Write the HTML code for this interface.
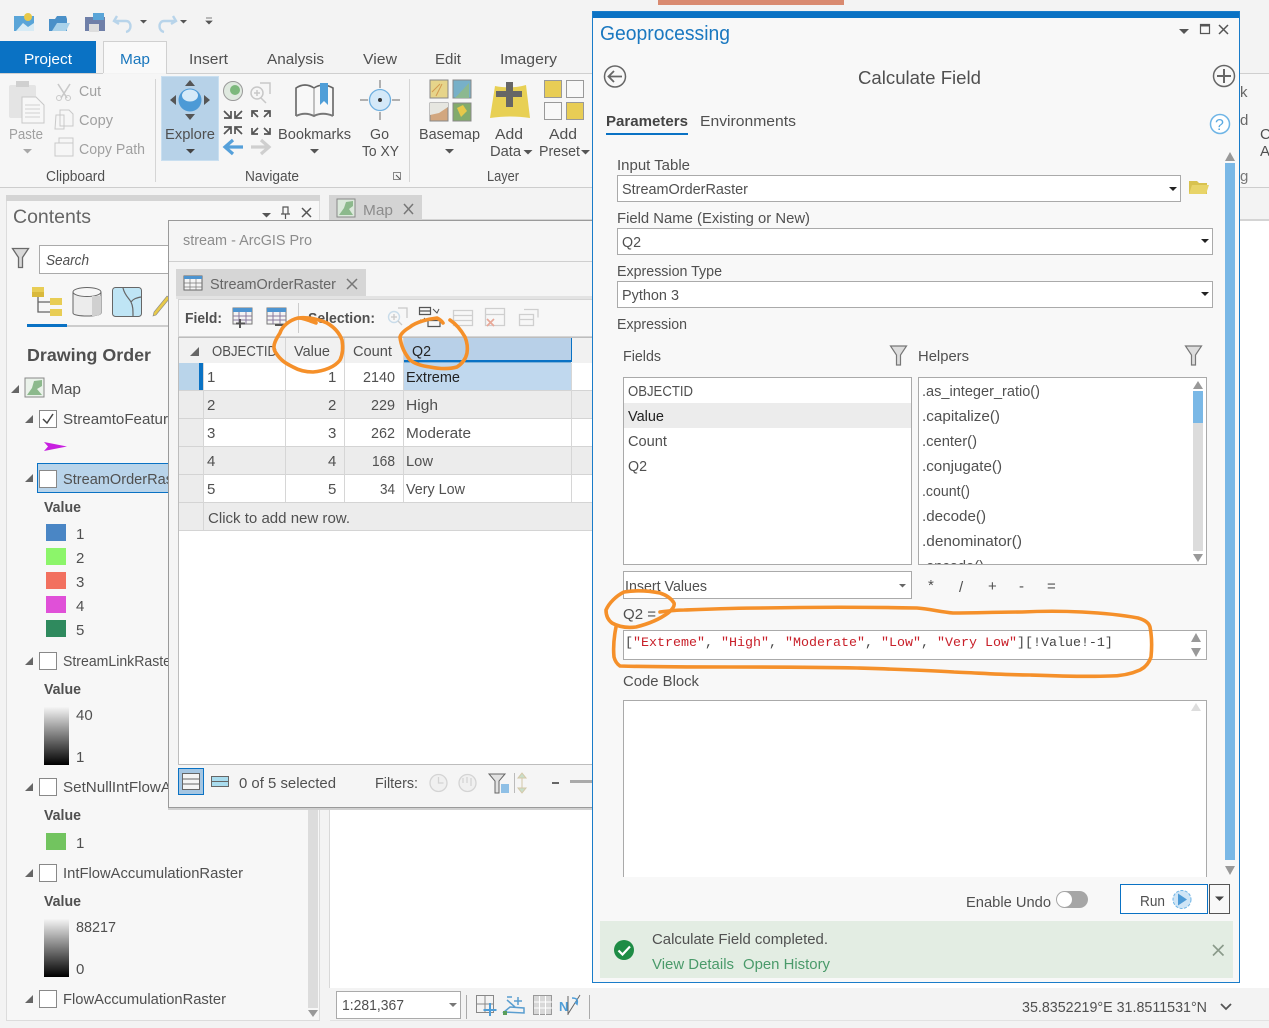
<!DOCTYPE html>
<html><head><meta charset="utf-8"><title>Calculate Field</title>
<style>
html,body{margin:0;padding:0;background:#f3f3f3;width:1269px;height:1028px;overflow:hidden}
svg{display:block;filter:blur(.35px)}
text{font-family:"Liberation Sans",sans-serif;font-size:15px;fill:#505050;white-space:pre}
.g{fill:#8c8c8c}.b{font-weight:bold}.d{fill:#222}
</style></head><body>
<svg width="1269" height="1028" viewBox="0 0 1269 1028" xmlns="http://www.w3.org/2000/svg">
<defs>
<linearGradient id="gr" x1="0" y1="0" x2="0" y2="1"><stop offset="0" stop-color="#f5f5f5"/><stop offset="1" stop-color="#000"/></linearGradient>
</defs>
<rect width="1269" height="1028" fill="#f3f3f3"/>
<rect x="658" y="0" width="186" height="5" fill="#d98a70"/>

<!-- quick access -->
<path d="M14 16h20v15H14z" fill="#5aa5d8"/><path d="M16 31l7-8 5 4 6-4v8z" fill="#d7ebf5"/><circle cx="28" cy="17" r="4" fill="#e7c94a"/>
<path d="M49 19h6l2-3h9l1 3v12H49z" fill="#4a90c8"/><path d="M52 31l5-8h13l-4 8z" fill="#a9d2ea"/>
<rect x="85" y="17" width="20" height="14" fill="#6f7fa8"/><rect x="89" y="24" width="10" height="8" fill="#ddd"/><rect x="93" y="13" width="11" height="7" fill="#5aa5d8"/>
<path d="M117 16l-3 5 5 3M115 21h11c6 0 6 10 0 11" fill="none" stroke="#b8d4ea" stroke-width="2.4"/>
<path d="M173 16l3 5-5 3M175 21h-11c-6 0-6 10 0 11" fill="none" stroke="#b8d4ea" stroke-width="2.4"/>
<path d="M140 20h7l-3.500 3.500zM180 20h7l-3.500 3.500z" fill="#555"/>
<path d="M206 18h6M206 21h6l-3 3z" fill="#555" stroke="#555" stroke-width=".7"/>

<!-- tabs -->
<rect x="0" y="41" width="96" height="32" fill="#0a72c4"/>
<text x="24" y="64" textLength="48" lengthAdjust="spacingAndGlyphs" style="fill:#fff">Project</text>
<path d="M103.500 73V41.500h63V73" fill="#f9f9f9" stroke="#d0d0d0"/>
<text x="120" y="64" textLength="30" lengthAdjust="spacingAndGlyphs" style="fill:#1876bd">Map</text>
<text x="189" y="64" textLength="39" lengthAdjust="spacingAndGlyphs">Insert</text>
<text x="267" y="64" textLength="57" lengthAdjust="spacingAndGlyphs">Analysis</text>
<text x="363" y="64" textLength="34" lengthAdjust="spacingAndGlyphs">View</text>
<text x="435" y="64" textLength="26" lengthAdjust="spacingAndGlyphs">Edit</text>
<text x="500" y="64" textLength="57" lengthAdjust="spacingAndGlyphs">Imagery</text>
<path d="M0 73.500H103M166 73.500H1269" stroke="#cfcfcf"/>
<rect x="0" y="74" width="1269" height="113" fill="#f6f6f6"/>
<path d="M0 187.500H1269" stroke="#cdcdcd"/>
<path d="M155.500 79v103M409.500 79v103" stroke="#d5d5d5"/>

<!-- clipboard -->
<rect x="9" y="85" width="27" height="33" rx="2" fill="#e4e4e4"/><rect x="16" y="81" width="13" height="6" fill="#d0d0d0"/>
<path d="M22 97h14l8 8v18H22z" fill="#f7f7f7" stroke="#c8c8c8"/><path d="M25 105h15M25 109h15M25 113h15M25 117h15" stroke="#d0d0d0"/>
<text x="9" y="139" textLength="34" lengthAdjust="spacingAndGlyphs" class="g" style="fill:#a0a0a0">Paste</text>
<path d="M23 149h9l-4.500 4.500z" fill="#a8a8a8"/>
<path d="M58 84l9 14M70 84l-9 14" stroke="#c9c9c9" stroke-width="1.600"/><circle cx="59" cy="98" r="2.500" fill="none" stroke="#c9c9c9"/><circle cx="68" cy="98" r="2.500" fill="none" stroke="#c9c9c9"/>
<text x="79" y="96" textLength="22" lengthAdjust="spacingAndGlyphs" style="fill:#a0a0a0">Cut</text>
<path d="M56 115h8v14h-9zM60 110h9l4 4v12h-13z" fill="#f6f6f6" stroke="#c9c9c9"/>
<text x="79" y="125" textLength="34" lengthAdjust="spacingAndGlyphs" style="fill:#a0a0a0">Copy</text>
<path d="M55 143h18v13H55zM59 138h14v5H59z" fill="#f6f6f6" stroke="#c9c9c9"/>
<text x="79" y="154" textLength="66" lengthAdjust="spacingAndGlyphs" style="fill:#a0a0a0">Copy Path</text>
<text x="46" y="181" textLength="59" lengthAdjust="spacingAndGlyphs">Clipboard</text>

<!-- navigate -->
<rect x="161.500" y="76.500" width="57" height="84" fill="#b7d2e8" stroke="#c9dff0"/>
<circle cx="190" cy="100" r="11.500" fill="#4d9ad6"/><ellipse cx="190" cy="95.500" rx="8" ry="6" fill="#d6eaf8"/>
<path d="M190 80l5 6h-10zM190 120l5-6h-10zM170 100l6-5v10zM210 100l-6-5v10z" fill="#555"/>
<text x="165" y="139" textLength="50" lengthAdjust="spacingAndGlyphs">Explore</text>
<path d="M186 149h9l-4.500 4.500z" fill="#444"/>
<circle cx="233" cy="91" r="9.500" fill="#dfe9df" stroke="#9a9a9a"/><circle cx="235" cy="90" r="5" fill="#7cb87c"/>
<circle cx="257" cy="93" r="6" fill="none" stroke="#c8c8c8" stroke-width="1.500"/><path d="M261 98l5 5M257 90v6M254 93h6M260 83h10v11" fill="none" stroke="#c8c8c8" stroke-width="1.500"/>
<path d="M224 111l7 7M224 118h7v-7M242 111l-7 7M242 118h-7v-7M224 134l7-7M224 127h7v7M242 134l-7-7M242 127h-7v7M252 111l6 6M252 117v-6h6M270 111l-6 6M270 117v-6h-6M252 134l6-6M252 128v6h6M270 134l-6-6M270 128v6h-6" fill="none" stroke="#555" stroke-width="1.700"/>
<path d="M243 147h-17M233 140l-8 7 8 7" fill="none" stroke="#55a0da" stroke-width="3.200"/>
<path d="M251 147h17M261 140l8 7-8 7" fill="none" stroke="#cfcfcf" stroke-width="3.200"/>
<path d="M296 116V88c6-4 12-4 18 0 6-4 12-4 19 0v28" fill="#f8f8f8" stroke="#666" stroke-width="1.600"/><path d="M314 88v28" stroke="#888"/>
<path d="M296 116c6-3 12-3 18 0 6-3 12-3 19 0" fill="none" stroke="#777" stroke-width="2"/><path d="M320 83h8v22l-4-4-4 4z" fill="#4f9ed8"/>
<text x="278" y="139" textLength="73" lengthAdjust="spacingAndGlyphs">Bookmarks</text>
<path d="M310 149h9l-4.500 4.500z" fill="#555"/>
<circle cx="380" cy="100" r="10.500" fill="#d4e9f8" stroke="#6fb0e0" stroke-width="1.300"/><circle cx="380" cy="100" r="2" fill="#333"/>
<path d="M380 80v8M380 112v8M360 100h8M392 100h8" stroke="#999" stroke-width="1.500"/>
<text x="370" y="139" textLength="19" lengthAdjust="spacingAndGlyphs">Go</text>
<text x="362" y="156" textLength="37" lengthAdjust="spacingAndGlyphs">To XY</text>
<text x="245" y="181" textLength="54" lengthAdjust="spacingAndGlyphs">Navigate</text>
<path d="M393.500 172.500h7v7h-7z" fill="none" stroke="#888"/><path d="M396 175l4 4" stroke="#555"/>

<!-- layer -->
<rect x="430" y="80" width="18" height="18" fill="#e6d48a" stroke="#888"/><path d="M432 92l8-8M436 96l6-12" stroke="#d29a50"/>
<rect x="453" y="80" width="18" height="18" fill="#77b0c8" stroke="#888"/><path d="M455 98l14-15v15z" fill="#8cb890"/>
<rect x="430" y="103" width="18" height="18" fill="#d2a77f" stroke="#888"/><path d="M430 103h18v4l-9 6-9 2z" fill="#e6e6e0"/>
<rect x="453" y="103" width="18" height="18" fill="#83ab6c" stroke="#888"/><path d="M457 108l6-3 4 6-6 6z" fill="#e7c94a"/>
<path d="M495 86c10 2 20 2 31-1l4 33c-13-2-26-2-40 0z" fill="#e8d054"/>
<path d="M506 82h7v9h9v6h-9v10h-7V97h-10v-6h10z" fill="#666"/>
<text x="495" y="139" textLength="28" lengthAdjust="spacingAndGlyphs">Add</text>
<text x="490" y="156" textLength="31" lengthAdjust="spacingAndGlyphs">Data</text>
<path d="M523.500 150h9l-4.500 4.500z" fill="#555"/>
<rect x="544.500" y="80.500" width="17" height="17" fill="#e8cd55" stroke="#999"/><rect x="566.500" y="80.500" width="17" height="17" fill="#f8f8f8" stroke="#999"/>
<rect x="544.500" y="102.500" width="17" height="17" fill="#f8f8f8" stroke="#999"/><rect x="566.500" y="102.500" width="17" height="17" fill="#e8cd55" stroke="#999"/>
<text x="549" y="139" textLength="28" lengthAdjust="spacingAndGlyphs">Add</text>
<text x="539" y="156" textLength="41" lengthAdjust="spacingAndGlyphs">Preset</text>
<path d="M581 150h9l-4.500 4.500z" fill="#555"/>
<text x="419" y="139" textLength="61" lengthAdjust="spacingAndGlyphs">Basemap</text>
<path d="M445 149h9l-4.500 4.500z" fill="#555"/>
<text x="487" y="181" textLength="32" lengthAdjust="spacingAndGlyphs">Layer</text>

<!-- left panel -->
<rect x="6.500" y="195.500" width="313" height="825" fill="#f7f7f7" stroke="#dcdcdc"/>
<rect x="6" y="195" width="314" height="6" fill="#d4d4d4"/>
<text x="13" y="223" style="font-size:19px;fill:#666" textLength="78" lengthAdjust="spacingAndGlyphs">Contents</text>
<path d="M262 213h9l-4.500 4.500z" fill="#555"/>
<path d="M283 207h5v7h-5zM281 214h9M285.500 214v5" fill="none" stroke="#555" stroke-width="1.200"/>
<path d="M302 208l9 9M311 208l-9 9" stroke="#555" stroke-width="1.500"/>
<path d="M12.500 248.500h16l-6 9v10h-4v-10z" fill="#d8d8d8" stroke="#6a6a6a" stroke-width="1.300"/>
<rect x="39.500" y="245.500" width="135" height="28" fill="#fff" stroke="#aaa"/>
<text x="46" y="265" style="font-style:italic" textLength="43" lengthAdjust="spacingAndGlyphs">Search</text>
<rect x="32" y="287" width="12" height="5" fill="#e8cd55"/><rect x="32" y="292" width="12" height="5" fill="#d9b93c"/>
<rect x="50" y="298" width="12" height="7" fill="#e8cd55"/><rect x="50" y="309" width="12" height="7" fill="#e8cd55"/>
<path d="M38 297v15h12M38 302h12" fill="none" stroke="#666" stroke-width="1.300"/>
<path d="M73 292v21c0 4 28 4 28 0v-21" fill="#ececec" stroke="#666"/><ellipse cx="87" cy="292" rx="14" ry="4.500" fill="#f6f6f6" stroke="#666"/><path d="M92 296h9v17c0 2-4 3-9 3z" fill="#d0d0d0"/>
<rect x="112.500" y="287.500" width="29" height="29" rx="3" fill="#bfe5f5" stroke="#666"/><path d="M123 288c2 8 6 10 8 14s2 8 2 14M131 302c2-3 5-4 10-5" fill="none" stroke="#666" stroke-width="1.200"/>
<path d="M153 316l3-1 14-17-3-2-13 16z" fill="#e7c94a" stroke="#888" stroke-width=".6"/>
<rect x="27" y="324" width="40" height="3" fill="#0a72c4"/><rect x="67" y="325" width="105" height="2" fill="#cdcdcd"/>
<text x="27" y="361" class="b" style="font-size:17.500px" textLength="124" lengthAdjust="spacingAndGlyphs">Drawing Order</text>
<path d="M11 393l8-8v8z" fill="#666"/>
<rect x="25" y="378" width="19" height="19" fill="#eaf2ea" stroke="#888"/><path d="M27 395l5-7 2-7 8-1v6l-5 3 5 6z" fill="#8cb98c"/>
<text x="51" y="394" textLength="30" lengthAdjust="spacingAndGlyphs">Map</text>
<path d="M25 423l8-8v8z" fill="#666"/>
<rect x="39.500" y="410.500" width="17" height="17" fill="#fff" stroke="#888"/><path d="M43 419l4 4 6-9" fill="none" stroke="#444" stroke-width="1.500"/>
<text x="63" y="424" textLength="105" lengthAdjust="spacingAndGlyphs">StreamtoFeatur</text>
<path d="M44 442l23 4.500-23 4.500 4-4.500z" fill="#c81fe0"/>
<path d="M25 482l8-8v8z" fill="#666"/>
<rect x="37.500" y="463.500" width="135" height="29" fill="#b9d4ea" stroke="#0a72c4"/>
<rect x="39.500" y="470.500" width="17" height="17" fill="#fff" stroke="#888"/>
<text x="63" y="484" textLength="110" lengthAdjust="spacingAndGlyphs">StreamOrderRas</text>
<text x="44" y="512" class="b" textLength="37" lengthAdjust="spacingAndGlyphs">Value</text>
<rect x="46" y="524" width="20" height="17" fill="#4a86c5"/><text x="76" y="539">1</text>
<rect x="46" y="548" width="20" height="17" fill="#8cf56a"/><text x="76" y="563">2</text>
<rect x="46" y="572" width="20" height="17" fill="#f2705f"/><text x="76" y="587">3</text>
<rect x="46" y="596" width="20" height="17" fill="#e050d8"/><text x="76" y="611">4</text>
<rect x="46" y="620" width="20" height="17" fill="#2f8a5e"/><text x="76" y="635">5</text>
<path d="M25 665l8-8v8z" fill="#666"/>
<rect x="39.500" y="652.500" width="17" height="17" fill="#fff" stroke="#888"/>
<text x="63" y="666" textLength="108" lengthAdjust="spacingAndGlyphs">StreamLinkRaste</text>
<text x="44" y="694" class="b" textLength="37" lengthAdjust="spacingAndGlyphs">Value</text>
<rect x="44" y="707" width="25" height="58" fill="url(#gr)"/><text x="76" y="720">40</text><text x="76" y="762">1</text>
<path d="M25 791l8-8v8z" fill="#666"/>
<rect x="39.500" y="778.500" width="17" height="17" fill="#fff" stroke="#888"/>
<text x="63" y="792" textLength="108" lengthAdjust="spacingAndGlyphs">SetNullIntFlowA</text>
<text x="44" y="820" class="b" textLength="37" lengthAdjust="spacingAndGlyphs">Value</text>
<rect x="46" y="833" width="20" height="17" fill="#72c45f"/><text x="76" y="848">1</text>
<path d="M25 877l8-8v8z" fill="#666"/>
<rect x="39.500" y="864.500" width="17" height="17" fill="#fff" stroke="#888"/>
<text x="63" y="878" textLength="180" lengthAdjust="spacingAndGlyphs">IntFlowAccumulationRaster</text>
<text x="44" y="906" class="b" textLength="37" lengthAdjust="spacingAndGlyphs">Value</text>
<rect x="44" y="919" width="25" height="58" fill="url(#gr)"/><text x="76" y="932" textLength="40" lengthAdjust="spacingAndGlyphs">88217</text><text x="76" y="974">0</text>
<path d="M25 1003l8-8v8z" fill="#666"/>
<rect x="39.500" y="990.500" width="17" height="17" fill="#fff" stroke="#888"/>
<text x="63" y="1004" textLength="163" lengthAdjust="spacingAndGlyphs">FlowAccumulationRaster</text>
<rect x="308" y="808" width="10" height="200" fill="#dcdcdc"/>
<path d="M308 1010h10l-5 7z" fill="#999"/>

<!-- map area -->
<rect x="329" y="195" width="940" height="26" fill="#f3f3f3"/>
<rect x="329" y="195" width="93" height="25" fill="#d4d4d4"/>
<rect x="337" y="199" width="18" height="18" fill="#dbe8db" stroke="#888"/><path d="M339 215l5-7 2-6 7-1v5l-4 3 4 6z" fill="#8cb98c"/>
<text x="363" y="215" class="g" textLength="30" lengthAdjust="spacingAndGlyphs">Map</text>
<path d="M404 204l9 10M413 204l-9 10" stroke="#777" stroke-width="1.500"/>
<rect x="330" y="221" width="939" height="767" fill="#fff"/>
<rect x="329" y="219" width="940" height="2" fill="#d4d4d4"/>
<path d="M329.500 221v767" stroke="#d8d8d8"/>
<!-- status bar -->
<rect x="330" y="988" width="939" height="32" fill="#f3f3f3"/>
<path d="M330 1020.500h939" stroke="#e2e2e2"/>
<rect x="336.500" y="991.500" width="124" height="27" fill="#fff" stroke="#aaa"/>
<text x="342" y="1010" textLength="62" lengthAdjust="spacingAndGlyphs">1:281,367</text>
<path d="M449 1003h8l-4 4z" fill="#777"/>
<path d="M466.500 995v24M589.500 995v24" stroke="#aaa"/>
<path d="M476.500 995.500h17v17h-17zM476.500 1004h17M485 995.500v17" fill="none" stroke="#888"/><path d="M490 1003v13M483.500 1010h13" stroke="#4f9ed8" stroke-width="2"/>
<path d="M504 1012l6-5 14 1v5zM507 1000l8 7M507 997h5M518 997v8M514 1001h8" fill="none" stroke="#5a9ed0" stroke-width="1.500"/><rect x="503" y="1011" width="4" height="4" fill="#5a9e5a"/>
<rect x="533.500" y="995.500" width="18" height="19" fill="#d8d8d8" stroke="#999"/><path d="M539.500 996v19M545.500 996v19M534 1002h18M534 1008h18" stroke="#fff"/>
<text x="559" y="1011" class="b" style="font-size:13px;fill:#4f9ed8">N</text>
<path d="M568 1014l12-19M568 996v19" stroke="#666" fill="none"/><path d="M572 998c5 0 6 2 5 6l-2-2" fill="none" stroke="#4f9ed8" stroke-width="1.600"/>
<text x="1022" y="1012" textLength="185" lengthAdjust="spacingAndGlyphs">35.8352219°E 31.8511531°N</text>
<path d="M1221 1004l5 5 5-5" fill="none" stroke="#555" stroke-width="1.800"/>

<!-- text behind GP pane -->
<text x="1240" y="97" style="fill:#666">k</text><text x="1240" y="125" style="fill:#666">d</text>
<text x="1260" y="139">C</text><text x="1260" y="156">A</text><text x="1240" y="181" style="fill:#777">g</text>

<!-- attribute table window -->
<rect x="168.500" y="220.500" width="430" height="587" fill="#f5f5f5" stroke="#9a9a9a"/>
<path d="M168 808.500h425M168 809.500h425" stroke="#d0d0d0"/>
<text x="183" y="245" class="g" textLength="129" lengthAdjust="spacingAndGlyphs">stream - ArcGIS Pro</text>
<path d="M169 261.500h424" stroke="#cfcfcf"/>
<rect x="176" y="269" width="190" height="27" fill="#d6d6d6"/>
<rect x="184" y="276" width="18" height="14" fill="#f4f4f4" stroke="#666"/><rect x="184" y="276" width="18" height="3" fill="#4d94d0"/><path d="M190 279v11M196 279v11M184 283h18M184 287h18" stroke="#777" stroke-width=".7"/>
<text x="210" y="289" style="fill:#666" textLength="126" lengthAdjust="spacingAndGlyphs">StreamOrderRaster</text>
<path d="M347 279l10 10M357 279l-10 10" stroke="#777" stroke-width="1.500"/>
<rect x="176" y="296" width="417" height="3" fill="#e3e3e3"/>
<rect x="178.500" y="299.500" width="420" height="37" fill="#f7f7f7" stroke="#d4d4d4"/>
<text x="185" y="323" class="b" textLength="37" lengthAdjust="spacingAndGlyphs">Field:</text>
<rect x="233" y="308" width="19" height="16" fill="#f3f3f3" stroke="#777"/><rect x="233" y="308" width="19" height="4" fill="#4d94d0"/><path d="M239 312v12M246 312v12M233 316h19M233 320h19" stroke="#887a9c"/><path d="M240 319v9M236 323.500h9" stroke="#555" stroke-width="2"/>
<rect x="267" y="308" width="19" height="16" fill="#f3f3f3" stroke="#777"/><rect x="267" y="308" width="19" height="4" fill="#4d94d0"/><path d="M273 312v12M280 312v12M267 316h19M267 320h19" stroke="#887a9c"/><path d="M275 325h9" stroke="#555" stroke-width="2"/>
<path d="M298.500 303v30" stroke="#ccc"/>
<text x="308" y="323" class="b" textLength="67" lengthAdjust="spacingAndGlyphs">Selection:</text>
<circle cx="394" cy="317" r="5.500" fill="none" stroke="#c9dcea" stroke-width="1.400"/><path d="M398 321l4 4M394 314v6M391 317h6M398 308h9v10" fill="none" stroke="#c9c9c9" stroke-width="1.300"/>
<path d="M419.500 307.500h11v7h-11zM419.500 311h11M428 320.500h12v6h-12z" fill="none" stroke="#555" stroke-width="1.200"/><path d="M433 309l4 4 2-4M420 320h6l-2-2" fill="none" stroke="#555"/>
<path d="M453.500 310.500h19v15h-19zM453.500 315.500h19M453.500 320.500h19" fill="none" stroke="#cfcfcf" stroke-width="1.300"/>
<path d="M485.500 308.500h19v17h-19zM485.500 314.500h19" fill="none" stroke="#cfcfcf" stroke-width="1.300"/><path d="M487 319l7 7M494 319l-7 7" stroke="#e8a898" stroke-width="1.700"/>
<path d="M519.500 314.500h14v11h-14zM524 309.500h14v8M519.500 319.500h14" fill="none" stroke="#cfcfcf" stroke-width="1.300"/>

<!-- table -->
<rect x="178.500" y="337.500" width="420" height="427" fill="#fff" stroke="#bdbdbd"/>
<rect x="179" y="338" width="414" height="25" fill="#f1f1f1"/>
<rect x="403" y="338" width="168" height="23" fill="#b8d0e8"/><rect x="403" y="360" width="168" height="2.500" fill="#0a72c4"/><path d="M571.500 338v24" stroke="#0a72c4"/>
<path d="M190 356l9-9v9z" fill="#666"/>
<text x="212" y="356" textLength="65" lengthAdjust="spacingAndGlyphs">OBJECTID</text>
<text x="294" y="356" textLength="36" lengthAdjust="spacingAndGlyphs">Value</text>
<text x="353" y="356" textLength="39" lengthAdjust="spacingAndGlyphs">Count</text>
<text x="412" y="356" textLength="19" lengthAdjust="spacingAndGlyphs" class="d">Q2</text>
<path d="M285.500 338v25M344.500 338v25M403.500 338v25" stroke="#d6d6d6"/>
<rect x="179" y="363" width="24" height="27" fill="#b9d4ea"/><rect x="199" y="363" width="4" height="27" fill="#0a72c4"/>
<rect x="404" y="363" width="167" height="27" fill="#c0d8ee"/>
<rect x="179" y="391" width="414" height="27" fill="#ececec"/>
<rect x="179" y="419" width="24" height="27" fill="#ececec"/>
<rect x="179" y="447" width="414" height="27" fill="#ececec"/>
<rect x="179" y="475" width="24" height="27" fill="#ececec"/>
<rect x="179" y="503" width="414" height="27" fill="#ececec"/>
<path d="M179 390.500h414M179 418.500h414M179 446.500h414M179 474.500h414M179 502.500h414M179 530.500h414" stroke="#d4d4d4"/>
<path d="M203.500 363v167M285.500 363v139M344.500 363v139M403.500 363v139M571.500 363v139" stroke="#d6d6d6"/>
<text x="207" y="382">1</text><text x="207" y="410">2</text><text x="207" y="438">3</text><text x="207" y="466">4</text><text x="207" y="494">5</text>
<text x="328" y="382">1</text><text x="328" y="410">2</text><text x="328" y="438">3</text><text x="328" y="466">4</text><text x="328" y="494">5</text>
<text x="363" y="382" textLength="32" lengthAdjust="spacingAndGlyphs">2140</text>
<text x="371" y="410" textLength="24" lengthAdjust="spacingAndGlyphs">229</text>
<text x="371" y="438" textLength="24" lengthAdjust="spacingAndGlyphs">262</text>
<text x="372" y="466" textLength="23" lengthAdjust="spacingAndGlyphs">168</text>
<text x="380" y="494" textLength="15" lengthAdjust="spacingAndGlyphs">34</text>
<text x="406" y="382" class="d" textLength="54" lengthAdjust="spacingAndGlyphs">Extreme</text>
<text x="406" y="410" textLength="32" lengthAdjust="spacingAndGlyphs">High</text>
<text x="406" y="438" textLength="65" lengthAdjust="spacingAndGlyphs">Moderate</text>
<text x="406" y="466" textLength="27" lengthAdjust="spacingAndGlyphs">Low</text>
<text x="406" y="494" textLength="59" lengthAdjust="spacingAndGlyphs">Very Low</text>
<text x="208" y="523" textLength="142" lengthAdjust="spacingAndGlyphs">Click to add new row.</text>

<!-- table status -->
<rect x="178.500" y="768.500" width="25" height="26" fill="#a5c6e2" stroke="#0a72c4"/>
<path d="M182.500 773.500h17v16h-17zM182.500 779h17M182.500 784h17" fill="#f4f4f4" stroke="#666"/>
<path d="M211.500 776.500h17v10h-17z" fill="#a9dcee" stroke="#666"/><path d="M212 781.500h16" stroke="#666"/>
<text x="239" y="788" textLength="97" lengthAdjust="spacingAndGlyphs">0 of 5 selected</text>
<text x="375" y="788" textLength="43" lengthAdjust="spacingAndGlyphs">Filters:</text>
<circle cx="438.500" cy="783" r="8.500" fill="#f0f0f0" stroke="#d4d4d4" stroke-width="1.300"/><path d="M438.500 777v6h5" fill="none" stroke="#d4d4d4" stroke-width="1.300"/>
<circle cx="467.500" cy="783" r="8.500" fill="#f0f0f0" stroke="#d4d4d4" stroke-width="1.300"/><path d="M463 778v5M467 777v6M471 778v8" stroke="#ccc"/>
<path d="M489 774h16l-6 7v12h-4v-12z" fill="#e2e2e2" stroke="#666"/><path d="M501 784h8v9h-8z" fill="#8fc0e6"/>
<path d="M514.500 773v20" stroke="#bbb"/><path d="M522 773l-4 5h8zM522 793l-4-5h8zM522 778v10" fill="#c9dec9" stroke="#d4c8a8"/>
<path d="M552 783h7" stroke="#666" stroke-width="2"/><path d="M570 781.500h23" stroke="#aaa" stroke-width="3"/>

<!-- geoprocessing pane -->
<rect x="592.500" y="11.500" width="647" height="971" fill="#f8f8f8" stroke="#1a7cc9"/>
<rect x="593" y="12" width="646" height="6" fill="#0a72c4"/>
<text x="600" y="40" style="font-size:20px;fill:#1a78c0" textLength="130" lengthAdjust="spacingAndGlyphs">Geoprocessing</text>
<path d="M1179 29h10l-5 5z" fill="#555"/>
<path d="M1200.500 24.500h9v9h-9z" fill="none" stroke="#555" stroke-width="1.200"/><path d="M1200 25.500h10" stroke="#555" stroke-width="2"/>
<path d="M1219 25l9 9M1228 25l-9 9" stroke="#555" stroke-width="1.500"/>
<circle cx="615" cy="76.500" r="10.500" fill="none" stroke="#666" stroke-width="1.500"/><path d="M622 76.500h-13M614 71l-5.500 5.500 5.500 5.500" fill="none" stroke="#666" stroke-width="1.800"/>
<text x="858" y="84" style="font-size:18px" textLength="123" lengthAdjust="spacingAndGlyphs">Calculate Field</text>
<circle cx="1224" cy="76" r="10.500" fill="none" stroke="#666" stroke-width="1.500"/><path d="M1224 69v14M1217 76h14" stroke="#666" stroke-width="2"/>
<text x="606" y="126" textLength="82" lengthAdjust="spacingAndGlyphs" style="fill:#444;font-weight:bold">Parameters</text>
<rect x="606" y="133" width="82" height="2" fill="#0a72c4"/>
<text x="700" y="126" textLength="96" lengthAdjust="spacingAndGlyphs">Environments</text>
<circle cx="1220" cy="124" r="9.500" fill="#fff" stroke="#6fb5e6" stroke-width="1.500"/>
<text x="1215" y="130" style="fill:#5aa9e0;font-size:16px">?</text>
<path d="M1225 161l5-9 5 9z" fill="#999"/>
<rect x="1225" y="163" width="10" height="697" fill="#7ab8e6"/>
<path d="M1225 866h10l-5 9z" fill="#999"/>
<text x="617" y="170" textLength="73" lengthAdjust="spacingAndGlyphs">Input Table</text>
<rect x="617.500" y="175.500" width="563" height="26" fill="#fff" stroke="#aaa"/>
<text x="622" y="194" textLength="126" lengthAdjust="spacingAndGlyphs">StreamOrderRaster</text>
<path d="M1169 187h8l-4 4z" fill="#222"/>
<path d="M1189 181h8l2 2h8v11h-18z" fill="#d8c24f"/><path d="M1189 194l3-9h17l-3 9z" fill="#e8d468"/>
<text x="617" y="223" textLength="193" lengthAdjust="spacingAndGlyphs">Field Name (Existing or New)</text>
<rect x="617.500" y="228.500" width="595" height="26" fill="#fff" stroke="#aaa"/>
<text x="622" y="247" textLength="19" lengthAdjust="spacingAndGlyphs">Q2</text>
<path d="M1201 239h8l-4 4z" fill="#222"/>
<text x="617" y="276" textLength="105" lengthAdjust="spacingAndGlyphs">Expression Type</text>
<rect x="617.500" y="281.500" width="595" height="26" fill="#fff" stroke="#aaa"/>
<text x="622" y="300" textLength="57" lengthAdjust="spacingAndGlyphs">Python 3</text>
<path d="M1201 292h8l-4 4z" fill="#222"/>
<text x="617" y="329" textLength="70" lengthAdjust="spacingAndGlyphs">Expression</text>
<text x="623" y="361" textLength="38" lengthAdjust="spacingAndGlyphs">Fields</text>
<path d="M890.500 346h16l-6 9v10h-4v-10z" fill="#ddd" stroke="#777" stroke-width="1.200"/>
<text x="918" y="361" textLength="51" lengthAdjust="spacingAndGlyphs">Helpers</text>
<path d="M1185.500 346h16l-6 9v10h-4v-10z" fill="#ddd" stroke="#777" stroke-width="1.200"/>
<rect x="623.500" y="377.500" width="288" height="187" fill="#fff" stroke="#aaa"/>
<rect x="624" y="403" width="287" height="25" fill="#ececec"/>
<text x="628" y="396" textLength="65" lengthAdjust="spacingAndGlyphs">OBJECTID</text>
<text x="628" y="421" class="d" textLength="36" lengthAdjust="spacingAndGlyphs">Value</text>
<text x="628" y="446" textLength="39" lengthAdjust="spacingAndGlyphs">Count</text>
<text x="628" y="471" textLength="19" lengthAdjust="spacingAndGlyphs">Q2</text>
<rect x="918.500" y="377.500" width="288" height="187" fill="#fff" stroke="#aaa"/>
<text x="922" y="396" textLength="118" lengthAdjust="spacingAndGlyphs">.as_integer_ratio()</text>
<text x="922" y="421" textLength="78" lengthAdjust="spacingAndGlyphs">.capitalize()</text>
<text x="922" y="446" textLength="55" lengthAdjust="spacingAndGlyphs">.center()</text>
<text x="922" y="471" textLength="80" lengthAdjust="spacingAndGlyphs">.conjugate()</text>
<text x="922" y="496" textLength="48" lengthAdjust="spacingAndGlyphs">.count()</text>
<text x="922" y="521" textLength="64" lengthAdjust="spacingAndGlyphs">.decode()</text>
<text x="922" y="546" textLength="100" lengthAdjust="spacingAndGlyphs">.denominator()</text>
<text x="922" y="571" textLength="62" lengthAdjust="spacingAndGlyphs">.encode()</text>
<rect x="918" y="564.500" width="289" height="12" fill="#f8f8f8"/>
<path d="M918 564.500h289" stroke="#aaa"/>
<rect x="1193" y="391" width="10" height="160" fill="#dcdcdc"/>
<rect x="1193" y="391" width="10" height="32" fill="#7ab8e6"/>
<path d="M1193 389l5-8 5 8zM1193 554l5 8 5-8z" fill="#999"/>
<rect x="623.500" y="571.500" width="288" height="27" fill="#fff" stroke="#aaa"/>
<text x="625" y="591" textLength="82" lengthAdjust="spacingAndGlyphs">Insert Values</text>
<path d="M899 584h7l-3.500 3.500z" fill="#666"/>
<text x="928" y="590">*</text><text x="959" y="592">/</text><text x="988" y="591">+</text><text x="1019" y="591">-</text><text x="1047" y="591">=</text>
<text x="623" y="619" textLength="33" lengthAdjust="spacingAndGlyphs">Q2 =</text>
<rect x="623.500" y="630.500" width="583" height="29" fill="#fff" stroke="#aaa"/>
<text x="625" y="646" style="font-family:'Liberation Mono',monospace;font-size:13.330px;fill:#444">[<tspan style="fill:#c8202a">"Extreme"</tspan>, <tspan style="fill:#c8202a">"High"</tspan>, <tspan style="fill:#c8202a">"Moderate"</tspan>, <tspan style="fill:#c8202a">"Low"</tspan>, <tspan style="fill:#c8202a">"Very Low"</tspan>][!Value!-1]</text>
<path d="M1191 642l5-9 5 9zM1191 648l5 9 5-9z" fill="#999"/>
<text x="623" y="686" textLength="76" lengthAdjust="spacingAndGlyphs">Code Block</text>
<path d="M623.500 877V700.500h583V877" fill="#fff" stroke="#aaa"/>
<path d="M1191 711l5-8 5 8z" fill="#ddd"/>
<rect x="593" y="877" width="632" height="44" fill="#f8f8f8"/>
<text x="966" y="907" textLength="85" lengthAdjust="spacingAndGlyphs">Enable Undo</text>
<rect x="1056" y="891" width="32" height="17" rx="8.500" fill="#a6a6a6"/><circle cx="1064.500" cy="899.500" r="7.500" fill="#fff"/>
<rect x="1120.500" y="884.500" width="87" height="29" fill="#fff" stroke="#0a72c4"/>
<text x="1140" y="906" textLength="25" lengthAdjust="spacingAndGlyphs">Run</text>
<circle cx="1182" cy="899.500" r="9" fill="#cfe5f6" stroke="#6fb5e6" stroke-dasharray="3 1.500"/><path d="M1178 893.500l9 6-9 6z" fill="#4d9ad6"/>
<rect x="1209.500" y="884.500" width="20" height="29" fill="#f8f8f8" stroke="#555"/>
<path d="M1215 896.500h9l-4.500 4.500z" fill="#444"/>
<rect x="600" y="921" width="633" height="57" fill="#e3ede3"/>
<circle cx="624" cy="950" r="10" fill="#1e8c45"/><path d="M618.500 950.500l4 4 7.500-8" fill="none" stroke="#fff" stroke-width="2.200"/>
<text x="652" y="944" textLength="176" lengthAdjust="spacingAndGlyphs">Calculate Field completed.</text>
<text x="652" y="969" textLength="82" lengthAdjust="spacingAndGlyphs" style="fill:#4a9a6a">View Details</text>
<text x="743" y="969" textLength="87" lengthAdjust="spacingAndGlyphs" style="fill:#4a9a6a">Open History</text>
<path d="M1213 945l10.500 10.500M1223.500 945l-10.500 10.500" stroke="#8a9a8a" stroke-width="1.600"/>

<!-- orange annotations -->
<g fill="none" stroke="#f5902a" stroke-width="3.600" stroke-linecap="round" stroke-linejoin="round">
<path d="M316 323C308 320 303 318 298 318C290 320 282 326 280 333C274 342 272 348 276 353C281 361 287 364 293 367C300 371 306 372 313 372C324 371 335 367 340 360C343 354 343 346 342 340C339 332 334 327 327 323C318 319 308 317 298 318"/>
<path d="M443 323C441 320 439 319 437 318C428 319 416 322 410 327C405 330 401 333 400 337C401 346 405 354 410 360C415 364 422 366 430 367C440 369 450 369 457 367C463 363 466 358 467 353C468 347 467 342 465 337C461 330 456 324 450 320"/>
<path d="M660 593C650 591 636 590 624 592C616 596 609 603 606 610C606 616 608 620 612 623C619 627 628 628 636 627C648 624 660 619 668 613C672 610 675 606 674 603C671 598 666 595 660 593"/>
<path d="M660 612C668 611 676 610 684 610C710 609 735 608 761 608C812 607 865 607 917 608C930 609 941 612 953 613C976 613 999 612 1022 612C1042 611 1062 611 1082 612C1102 613 1122 615 1138 618C1145 620 1149 623 1150 627C1152 637 1152 647 1151 657C1149 663 1146 667 1140 670C1131 674 1120 676 1110 676C1083 677 1057 676 1030 675C1005 675 979 673 954 672C922 670 889 669 857 668C815 667 772 667 729 667C692 667 656 667 620 666C617 664 615 661 614 657C613 647 614 637 616 627"/>
</g>
</svg>
</body></html>
